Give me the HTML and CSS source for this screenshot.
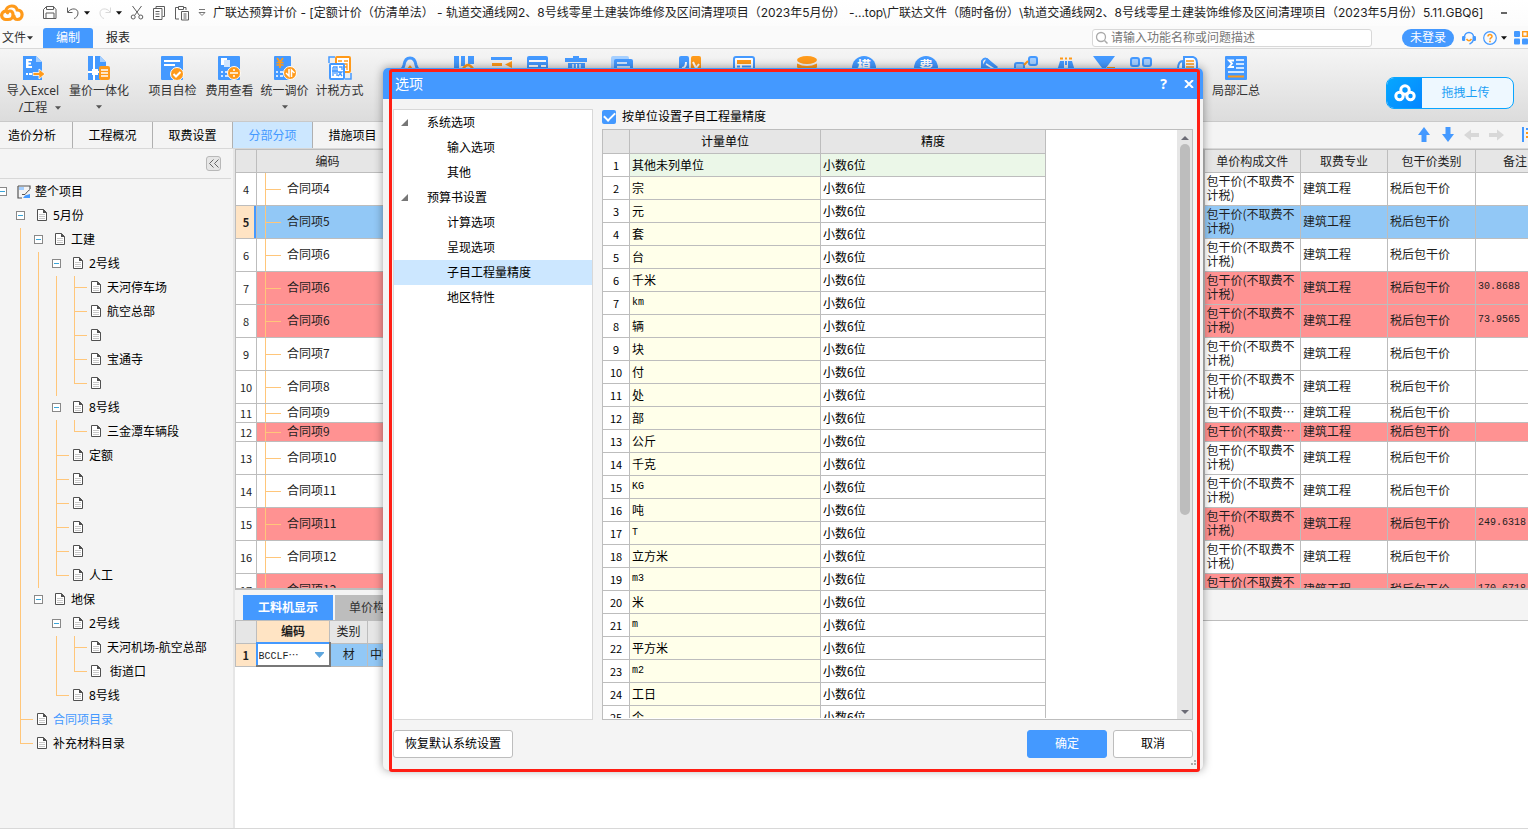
FILE: index.html
```html
<!DOCTYPE html>
<html lang="zh-CN">
<head>
<meta charset="utf-8">
<title>广联达预算计价</title>
<link rel="stylesheet" href="styles.css">
</head>
<body>
<svg class="defs" aria-hidden="true">
  <symbol id="doc" viewBox="0 0 12 14"><path d="M1.5 1.5h6l3 3v8h-9z" fill="#fff" stroke="#505050" stroke-linejoin="round"/><path d="M7 1l4 4H7z" fill="#505050"/><path d="M3 6.5h6M3 8.5h6M3 10.5h6" stroke="#c8c8c8"/></symbol>
  <symbol id="caret" viewBox="0 0 7 4"><path d="M0 0h7L3.5 4z" fill="currentColor"/></symbol>
  <symbol id="cloud" viewBox="0 0 24 18"><path d="M8 15.500H6a4.200 4.200 0 0 1-.4-8.400C6.200 4 8.800 2 11.700 2c3 0 4.900 1.700 5.500 4 3 .2 4.900 2.100 4.900 4.600 0 2.800-2 4.900-4.600 4.900-2.300 0-3.500-1.500-3.500-3.500M8 15.500c4 0 5-1.800 5-5 0-2.600-1.400-3.500-3-3.500-1.200 0-2.200.7-2.500 1.800" fill="none" stroke="#ff9a1a" stroke-width="3.200" stroke-linecap="round"/></symbol>
</svg>
<div class="app">
  <header class="titlebar">
    <svg class="logo" viewBox="0 0 24 18"><use href="#cloud"/></svg>
    <div class="quick">
      <button aria-label="保存"><svg width="16" height="16" viewBox="0 0 16 16"><path d="M1.500 13.500v-9l3-3h7l2.500 3v9zM4.500 1.500v3h7v-3M4 13V8h8v5" fill="none" stroke="#5c5c5c"/></svg></button>
      <button aria-label="撤销"><svg width="14" height="14" viewBox="0 0 14 14"><path d="M1.500 1.500v5h5M2 6c3-4.500 10-4 10 1 0 3-2 5-4 5.500" fill="none" stroke="#5c5c5c"/></svg><svg class="qc" width="6" height="4"><use href="#caret"/></svg></button>
      <button aria-label="恢复"><svg width="14" height="14" viewBox="0 0 14 14"><path d="M12.500 1.500v5h-5M12 6C9 1.500 2 2 2 7c0 3 2 5 4 5.500" fill="none" stroke="#d8d8d8"/></svg><svg class="qc" width="6" height="4"><use href="#caret"/></svg></button>
      <button aria-label="剪切"><svg width="14" height="16" viewBox="0 0 14 16"><path d="M2.500 1l7 9.500M11.500 1l-7 9.500" stroke="#5c5c5c"/><circle cx="3.200" cy="12" r="2" fill="none" stroke="#5c5c5c"/><circle cx="10.800" cy="12" r="2" fill="none" stroke="#5c5c5c"/></svg></button>
      <button aria-label="复制"><svg width="14" height="16" viewBox="0 0 14 16"><path d="M4 3.500V1.500h8.500v10h-2M1.500 3.500h8.500v11h-8.500zM3.500 6.500h4M3.500 9h4M3.500 11.500h4" fill="none" stroke="#5c5c5c"/></svg></button>
      <button aria-label="粘贴"><svg width="16" height="16" viewBox="0 0 16 16"><path d="M5 14H1.500V2.500H4m6 0h2V5M4.500 1.500h5v3h-5zM7.500 6.500h7v8.500h-7zM9.500 9h3M9.500 11h3M9.500 13h3" fill="none" stroke="#5c5c5c"/></svg></button>
      <button aria-label="更多"><svg width="8" height="8" viewBox="0 0 8 8"><path d="M1 .5h6M1 3.500h6L4 6.500z" fill="none" stroke="#777"/></svg></button>
    </div>
    <h1 class="title">广联达预算计价 - [定额计价（仿清单法） - 轨道交通线网2、8号线零星土建装饰维修及区间清理项目（2023年5月份） -...top\广联达文件（随时备份）\轨道交通线网2、8号线零星土建装饰维修及区间清理项目（2023年5月份）5.11.GBQ6]</h1>
    <button class="minimize" aria-label="最小化"></button>
  </header>
  <nav class="menubar">
    <button class="menu file">文件<svg width="6" height="4"><use href="#caret"/></svg></button>
    <button class="menu current">编制</button>
    <button class="menu">报表</button>
    <label class="search"><svg width="14" height="14" viewBox="0 0 14 14"><circle cx="6" cy="6" r="4.500" fill="none" stroke="#aaa" stroke-width="1.300"/><path d="M9.500 9.500l3 3" stroke="#aaa" stroke-width="1.500"/></svg><input type="text" placeholder="请输入功能名称或问题描述" aria-label="搜索"></label>
    <button class="login">未登录</button>
    <button class="tool" aria-label="客服"><svg width="14" height="14" viewBox="0 0 14 14"><path d="M2.500 7V6a4.500 4.500 0 0 1 9 0v1c0 3.500-1.500 5-4 6" fill="none" stroke="#4499ff" stroke-width="1.500"/><rect x="0" y="5" width="3.200" height="5" rx="1.200" fill="#4499ff"/><rect x="10.800" y="5" width="3.200" height="5" rx="1.200" fill="#4499ff"/><path d="M4.500 8q2.500 3.500 5 0" fill="none" stroke="#ff9a1a" stroke-width="1.500"/></svg></button>
    <button class="tool help" aria-label="帮助"><svg width="14" height="14" viewBox="0 0 14 14"><circle cx="7" cy="7" r="6.300" fill="none" stroke="#4499ff" stroke-width="1.200"/><path d="M5 5.500C5 3 9 3 9 5.400 9 7 7 6.800 7 8.500" fill="none" stroke="#ff9a1a" stroke-width="1.500"/><circle cx="7" cy="10.400" r=".9" fill="#ff9a1a"/></svg><svg class="qc" width="6" height="4"><use href="#caret"/></svg></button>
    <button class="tool apps" aria-label="应用"><svg width="14" height="14" viewBox="0 0 14 14"><g fill="#4499ff"><rect width="6" height="6" rx="1"/><rect y="7.500" width="6" height="6" rx="1"/><rect x="8" y="7.500" width="6" height="6" rx="1"/></g><rect x="8.700" y=".7" width="4.600" height="4.600" fill="none" stroke="#ff9a1a" stroke-width="1.400"/></svg></button>
  </nav>
  <div class="ribbon">
    <button class="rb wide"><svg width="24" height="24" viewBox="0 0 24 24"><path d="M2 0h13l6 6v18H2z" fill="#4499ff"/><path d="M15 0v6h6z" fill="#a5cfff"/><path d="M5 3h6v2H7.500v1.500H10v2H7.500V10H11v2H5zM5 17h2v2H5zM8 17h3v2H8z" fill="#fff"/><path d="M12 16.500h6V13l6 5-6 5v-3.500h-6z" fill="#ff9a1a" stroke="#fff" stroke-width=".8"/></svg><span>导入Excel<br>/工程</span><svg class="drop drop-right" width="6" height="4"><use href="#caret"/></svg></button>
    <button class="rb wide"><svg width="24" height="24" viewBox="0 0 24 24"><path d="M1 0h12l6 6v5h-6v13H1z" fill="#4499ff"/><path d="M13 0v6h6z" fill="#a5cfff"/><path d="M7 0v24M1 16h12" stroke="#fff" stroke-width="2"/><rect x="5" y="13" width="6" height="6" fill="#fff"/><rect x="12" y="10" width="11" height="14" rx="2" fill="#ff9a1a"/><path d="M14 14h7M14 17h7M14 20h7" stroke="#fff" stroke-width="1.300"/></svg><span>量价一体化</span><svg class="drop" width="6" height="4"><use href="#caret"/></svg></button>
    <button class="rb check"><svg width="24" height="24" viewBox="0 0 24 24"><rect x="0" width="22" height="24" rx="1" fill="#4499ff"/><path d="M3 5h16M3 9h11" stroke="#fff" stroke-width="2"/><circle cx="16" cy="18" r="6.500" fill="#ff9a1a" stroke="#fff"/><path d="M12.500 18l2.500 2.500 4.500-4.500" fill="none" stroke="#fff" stroke-width="2"/></svg><span>项目自检</span></button>
    <button class="rb"><svg width="24" height="24" viewBox="0 0 24 24"><rect x="0" width="22" height="24" rx="1" fill="#4499ff"/><rect x="3" y="2" width="6" height="7" fill="#fff"/><rect x="6" y="4" width="6" height="7" fill="#cfe5ff"/><path d="M3 16h2M7 16h3M3 20h2M7 20h3" stroke="#fff" stroke-width="1.500"/><circle cx="16" cy="17" r="6.500" fill="#ff9a1a" stroke="#fff"/><path d="M12 17h8" stroke="#fff" stroke-width="1.500"/><circle cx="16" cy="14" r="1" fill="#fff"/><circle cx="16" cy="20" r="1" fill="#fff"/></svg><span>费用查看</span></button>
    <button class="rb narrow"><svg width="24" height="24" viewBox="0 0 24 24"><rect x="1" width="17" height="24" rx="1" fill="#4499ff"/><path d="M4 2l3 4 3-4M7 6v6M3.500 6.500h7M3.500 9h7" fill="none" stroke="#ff9a1a" stroke-width="1.700"/><path d="M3 16h2M7 16h3M3 20h2M7 20h3" stroke="#fff" stroke-width="1.500"/><circle cx="17" cy="17" r="6.500" fill="#ff9a1a" stroke="#fff"/><path d="M16 13v7l-3-3M18.500 21v-7l3 3" fill="none" stroke="#fff" stroke-width="1.500"/></svg><span>统一调价</span><svg class="drop" width="6" height="4"><use href="#caret"/></svg></button>
    <button class="rb"><svg width="24" height="24" viewBox="0 0 24 24"><path d="M1 7V1h6M23 17v6h-6" fill="none" stroke="#4499ff" stroke-width="1.500"/><rect x="8" y="1" width="14" height="15" rx="1" fill="#fff" stroke="#ff9a1a" stroke-width="2"/><path d="M10 5h4M16 5h4M12 8h7v6M15 11h4" stroke="#ff9a1a" stroke-width="1.300" fill="none"/><rect x="2" y="8" width="14" height="15" rx="1" fill="#fff" stroke="#4499ff" stroke-width="2"/><path d="M5 11h4v9M5 11v9M4 15h6M7 12v6M11 11h3v3M10 16h4l-4 4M11 16l3 4" fill="none" stroke="#4499ff" stroke-width="1.300"/></svg><span>计税方式</span></button>
    <span class="ic s30"><svg width="24" height="24" viewBox="0 0 24 24"><path d="M0 15q5-1 6-6 1-7 6-7t6 7q1 5 6 6" fill="none" stroke="#4499ff" stroke-width="3"/><path d="M12 9l3 4H9z" fill="#ff9a1a"/></svg></span>
    <span class="ic s30"><svg width="24" height="24" viewBox="0 0 24 24"><path d="M2 0h5v16H2zM9 0h4v10H9zM16 0h6v8h-6z" fill="#4499ff"/><path d="M11 13q5-8 10 0" fill="none" stroke="#ff9a1a" stroke-width="2.500"/></svg></span>
    <span class="ic s14"><svg width="24" height="24" viewBox="0 0 24 24"><path d="M1 1h21v3H1zM1 12h21v3H1z" fill="#4499ff"/><path d="M2 7h10v3H2zM22 5v7l-7-3.500z" fill="#ff9a1a"/></svg></span>
    <span class="ic s12"><svg width="24" height="24" viewBox="0 0 24 24"><rect x="1" width="21" height="24" rx="2" fill="#4499ff"/><path d="M3 5h17M3 10h9M15 10h5" stroke="#fff" stroke-width="2"/></svg></span>
    <span class="ic s14"><svg width="24" height="24" viewBox="0 0 24 24"><path d="M9 0h6v2h8v4H1V2h8zM4 7h17v17H4z" fill="#4499ff"/><path d="M9 8v12M12.500 8v12M16 8v12" stroke="#fff" stroke-width="1.300"/></svg></span>
    <span class="ic s22"><svg width="24" height="24" viewBox="0 0 24 24"><rect x="1" width="18" height="20" rx="2" fill="#a5cfff"/><rect x="4" y="3" width="19" height="20" rx="2" fill="#4499ff"/><path d="M7 7h10M7 11h13" stroke="#fff" stroke-width="1.500"/></svg></span>
    <span class="ic s44"><svg width="24" height="24" viewBox="0 0 24 24"><rect x="1" width="10" height="24" rx="2" fill="#4499ff"/><rect x="13" width="10" height="24" rx="2" fill="#ff9a1a"/><path d="M4 12q4 0 4-6M15 6l3 6 3-4" fill="none" stroke="#fff" stroke-width="2"/></svg></span>
    <span class="ic s30"><svg width="24" height="24" viewBox="0 0 24 24"><rect x="2" y="1" width="20" height="22" rx="2" fill="#fff" stroke="#4499ff" stroke-width="2"/><path d="M5 6h14" stroke="#ff9a1a" stroke-width="4"/><path d="M5 10.500h3M10 10.500h9" stroke="#4499ff" stroke-width="2"/></svg></span>
    <span class="ic s38"><svg width="24" height="24" viewBox="0 0 24 24"><ellipse cx="13" cy="4" rx="10" ry="4" fill="#ff9a1a"/><path d="M3 7.500q10 5 20 0v4q-10 5-20 0z" fill="#ff9a1a"/></svg></span>
    <span class="ic s34 disc">模</span>
    <span class="ic s38 disc">费</span>
    <span class="ic s38"><svg width="24" height="24" viewBox="0 0 24 24"><path d="M11 2l11 9-8 9-11-5z" fill="#4499ff"/><path d="M6 12V5q3-5 7 0v5" fill="none" stroke="#4499ff" stroke-width="2"/><path d="M10 8l8 5" stroke="#fff" stroke-width="1.500"/></svg></span>
    <span class="ic s14"><svg width="24" height="24" viewBox="0 0 24 24"><rect x="15" y="1" width="8" height="8" rx="2" fill="#a5cfff" stroke="#4499ff" stroke-width="2"/><rect x="1" y="7" width="9" height="8" rx="2" fill="#a5cfff" stroke="#4499ff" stroke-width="2"/><path d="M10 9l4-4" stroke="#ff9a1a" stroke-width="2"/></svg></span>
    <span class="ic s16"><svg width="24" height="24" viewBox="0 0 24 24"><path d="M6 2.500h3M11 2.500h2M15 2.500h3" stroke="#ff9a1a" stroke-width="2"/><path d="M6 5h4v10H3zM11 5h2v4h-2zM14 5h4l3 10h-7z" fill="#4499ff"/></svg></span>
    <span class="ic s14"><svg width="24" height="24" viewBox="0 0 24 24"><path d="M1 0h22l-9 12v8l-4-3v-5z" fill="#4499ff"/><path d="M15 12h8" stroke="#ff9a1a" stroke-width="2"/></svg></span>
    <span class="ic s14"><svg width="24" height="24" viewBox="0 0 24 24"><rect x="1" y="2" width="8" height="8" rx="2" fill="#a5cfff" stroke="#4499ff" stroke-width="2"/><rect x="13" y="2" width="8" height="8" rx="2" fill="#a5cfff" stroke="#4499ff" stroke-width="2"/></svg></span>
    <span class="ic s22"><svg width="24" height="24" viewBox="0 0 24 24"><path d="M8 1h9q4 1 4 6v12H8z" fill="#fff" stroke="#4499ff" stroke-width="2"/><path d="M10 5h8M10 8h8M10 11h8" stroke="#ff9a1a" stroke-width="1.500"/><path d="M2 13q0-8 5-8v8z" fill="#fff" stroke="#4499ff" stroke-width="2"/></svg></span>
    <button class="rb last"><svg width="24" height="24" viewBox="0 0 24 24"><rect x="1" width="22" height="24" rx="1" fill="#4499ff"/><path d="M10 4.500H5l3 3-3 3.500h5" fill="none" stroke="#fff" stroke-width="1.800"/><path d="M12 4h8M12 8h8M12 12h8M4 16h16" stroke="#fff" stroke-width="1.700"/><path d="M4 20.500h16" stroke="#ff9a1a" stroke-width="2"/></svg><span>局部汇总</span></button>
    <button class="upload"><span class="up-icon"><svg width="24" height="20" viewBox="0 0 24 20"><g fill="none" stroke="#fff" stroke-width="3"><circle cx="12" cy="7" r="4.200"/><circle cx="6.500" cy="13" r="3.700"/><circle cx="17.500" cy="13" r="3.700"/></g></svg></span><span class="up-text">拖拽上传</span></button>
  </div>
  <nav class="tabs">
    <button class="tab first">造价分析</button><button class="tab">工程概况</button><button class="tab">取费设置</button><button class="tab active">分部分项</button><button class="tab">措施项目</button>
    <div class="arrows">
      <button aria-label="上移"><svg width="16" height="16" viewBox="0 0 16 16"><path d="M8 0l6 8h-3.500v7h-5V8H2z" fill="#4499ff"/></svg></button>
      <button aria-label="下移"><svg width="16" height="16" viewBox="0 0 16 16"><path d="M8 15L2 7h3.500V0h5v7H14z" fill="#4499ff"/></svg></button>
      <button aria-label="左移"><svg width="16" height="16" viewBox="0 0 16 16"><path d="M0 8l7-5.500V6h8v4H7v3.500z" fill="#d8d8d8"/></svg></button>
      <button aria-label="右移"><svg width="16" height="16" viewBox="0 0 16 16"><path d="M16 8L9 2.500V6H1v4h8v3.500z" fill="#d8d8d8"/></svg></button>
      <button class="edge" aria-label="展开到"><svg width="6" height="16" viewBox="0 0 6 16"><path d="M1 0v15M4 2h2" stroke="#4499ff" stroke-width="2"/><path d="M4 6h2M4 10h2" stroke="#ff9a1a" stroke-width="2"/></svg></button>
    </div>
  </nav>
  <main class="work">
    <aside class="side">
      <div class="side-top"><button class="fold" aria-label="收起"><svg width="10" height="9" viewBox="0 0 10 9"><path d="M4.500.5l-4 4 4 4M9.500.5l-4 4 4 4" fill="none" stroke="#666"/></svg></button></div>
      <ul class="tree">
        <li class="root"><i class="g"><button class="ex" aria-label="折叠"></button></i><svg class="ri" viewBox="0 0 14 14"><path d="M1 1h12v3M1 1v12h4" fill="none" stroke="#555" stroke-width="1.200"/><path d="M2 2h5v3H2z" fill="#a5cfff"/><path d="M5 9.500h3q3-4 5-5" fill="none" stroke="#555"/><path d="M6 13l2-2.500 5-1.500v4z" fill="#4499ff"/></svg>整个项目</li>
        <li><i class="g"></i><i class="g"><button class="ex" aria-label="折叠"></button></i><svg class="di"><use href="#doc"/></svg>5月份</li>
        <li><i class="g"></i><i class="g v"></i><i class="g"><button class="ex" aria-label="折叠"></button></i><svg class="di"><use href="#doc"/></svg>工建</li>
        <li><i class="g"></i><i class="g v"></i><i class="g v"></i><i class="g"><button class="ex" aria-label="折叠"></button></i><svg class="di"><use href="#doc"/></svg>2号线</li>
        <li><i class="g"></i><i class="g v"></i><i class="g v"></i><i class="g v"></i><i class="g v b"></i><svg class="di"><use href="#doc"/></svg>天河停车场</li>
        <li><i class="g"></i><i class="g v"></i><i class="g v"></i><i class="g v"></i><i class="g v b"></i><svg class="di"><use href="#doc"/></svg>航空总部</li>
        <li><i class="g"></i><i class="g v"></i><i class="g v"></i><i class="g v"></i><i class="g v b"></i><svg class="di"><use href="#doc"/></svg></li>
        <li><i class="g"></i><i class="g v"></i><i class="g v"></i><i class="g v"></i><i class="g v b"></i><svg class="di"><use href="#doc"/></svg>宝通寺</li>
        <li><i class="g"></i><i class="g v"></i><i class="g v"></i><i class="g v"></i><i class="g h b"></i><svg class="di"><use href="#doc"/></svg></li>
        <li><i class="g"></i><i class="g v"></i><i class="g v"></i><i class="g"><button class="ex" aria-label="折叠"></button></i><svg class="di"><use href="#doc"/></svg>8号线</li>
        <li><i class="g"></i><i class="g v"></i><i class="g v"></i><i class="g v"></i><i class="g h b"></i><svg class="di"><use href="#doc"/></svg>三金潭车辆段</li>
        <li><i class="g"></i><i class="g v"></i><i class="g v"></i><i class="g v b"></i><svg class="di"><use href="#doc"/></svg>定额</li>
        <li><i class="g"></i><i class="g v"></i><i class="g v"></i><i class="g v b"></i><svg class="di"><use href="#doc"/></svg></li>
        <li><i class="g"></i><i class="g v"></i><i class="g v"></i><i class="g v b"></i><svg class="di"><use href="#doc"/></svg></li>
        <li><i class="g"></i><i class="g v"></i><i class="g v"></i><i class="g v b"></i><svg class="di"><use href="#doc"/></svg></li>
        <li><i class="g"></i><i class="g v"></i><i class="g v"></i><i class="g v b"></i><svg class="di"><use href="#doc"/></svg></li>
        <li><i class="g"></i><i class="g v"></i><i class="g v"></i><i class="g h b"></i><svg class="di"><use href="#doc"/></svg>人工</li>
        <li><i class="g"></i><i class="g v"></i><i class="g"><button class="ex" aria-label="折叠"></button></i><svg class="di"><use href="#doc"/></svg>地保</li>
        <li><i class="g"></i><i class="g v"></i><i class="g"></i><i class="g"><button class="ex" aria-label="折叠"></button></i><svg class="di"><use href="#doc"/></svg>2号线</li>
        <li><i class="g"></i><i class="g v"></i><i class="g"></i><i class="g v"></i><i class="g v b"></i><svg class="di"><use href="#doc"/></svg>天河机场-航空总部</li>
        <li><i class="g"></i><i class="g v"></i><i class="g"></i><i class="g v"></i><i class="g h b"></i><svg class="di"><use href="#doc"/></svg>&nbsp;街道口</li>
        <li><i class="g"></i><i class="g v"></i><i class="g"></i><i class="g h b"></i><svg class="di"><use href="#doc"/></svg>8号线</li>
        <li class="on"><i class="g"></i><i class="g v b"></i><svg class="di"><use href="#doc"/></svg>合同项目录</li>
        <li><i class="g"></i><i class="g h b"></i><svg class="di"><use href="#doc"/></svg>补充材料目录</li>
      </ul>
    </aside>
    <section class="content">
      <div class="grid-pane">
        <table class="grid main-grid">
          <colgroup><col class="c-num"><col class="c-code"><col><col class="c-file"><col class="c-major"><col class="c-kind"><col class="c-note"></colgroup>
          <thead><tr><th></th><th>编码</th><th></th><th>单价构成文件</th><th>取费专业</th><th>包干价类别</th><th>备注</th></tr></thead>
          <tbody>
            <tr><td>4</td><td>合同项4</td><td></td><td>包干价(不取费不<br>计税)</td><td>建筑工程</td><td>税后包干价</td><td></td></tr>
            <tr class="sel"><td>5</td><td>合同项5</td><td></td><td>包干价(不取费不<br>计税)</td><td>建筑工程</td><td>税后包干价</td><td></td></tr>
            <tr><td>6</td><td>合同项6</td><td></td><td>包干价(不取费不<br>计税)</td><td>建筑工程</td><td>税后包干价</td><td></td></tr>
            <tr class="red"><td>7</td><td>合同项6</td><td></td><td>包干价(不取费不<br>计税)</td><td>建筑工程</td><td>税后包干价</td><td>30.8688</td></tr>
            <tr class="red"><td>8</td><td>合同项6</td><td></td><td>包干价(不取费不<br>计税)</td><td>建筑工程</td><td>税后包干价</td><td>73.9565</td></tr>
            <tr><td>9</td><td>合同项7</td><td></td><td>包干价(不取费不<br>计税)</td><td>建筑工程</td><td>税后包干价</td><td></td></tr>
            <tr><td>10</td><td>合同项8</td><td></td><td>包干价(不取费不<br>计税)</td><td>建筑工程</td><td>税后包干价</td><td></td></tr>
            <tr class="low"><td>11</td><td>合同项9</td><td></td><td>包干价(不取费⋯</td><td>建筑工程</td><td>税后包干价</td><td></td></tr>
            <tr class="low red"><td>12</td><td>合同项9</td><td></td><td>包干价(不取费⋯</td><td>建筑工程</td><td>税后包干价</td><td></td></tr>
            <tr><td>13</td><td>合同项10</td><td></td><td>包干价(不取费不<br>计税)</td><td>建筑工程</td><td>税后包干价</td><td></td></tr>
            <tr><td>14</td><td>合同项11</td><td></td><td>包干价(不取费不<br>计税)</td><td>建筑工程</td><td>税后包干价</td><td></td></tr>
            <tr class="red"><td>15</td><td>合同项11</td><td></td><td>包干价(不取费不<br>计税)</td><td>建筑工程</td><td>税后包干价</td><td>249.6318</td></tr>
            <tr><td>16</td><td>合同项12</td><td></td><td>包干价(不取费不<br>计税)</td><td>建筑工程</td><td>税后包干价</td><td></td></tr>
            <tr class="red"><td>17</td><td>合同项12</td><td></td><td>包干价(不取费不<br>计税)</td><td>建筑工程</td><td>税后包干价</td><td>170.6718</td></tr>
          </tbody>
        </table>
      </div>
      <div class="lower">
        <div class="lower-tabs"><button class="lt active">工料机显示</button><button class="lt">单价构成</button></div>
        <table class="grid lower-grid">
          <colgroup><col class="c-num"><col class="l-code"><col class="l-type"><col></colgroup>
          <thead><tr><th></th><th class="cur">编码</th><th>类别</th><th></th></tr></thead>
          <tbody><tr><td>1</td><td class="edit"><div class="combo"><input type="text" value="BCCLF⋯" aria-label="编码"><svg width="9" height="6" viewBox="0 0 9 6"><path d="M0 0h9v1L4.500 6 0 1z" fill="#5ea6de"/></svg></div></td><td>材</td><td>中定额</td></tr></tbody>
        </table>
      </div>
    </section>
  </main>

  <section class="dialog" role="dialog" aria-labelledby="dlg-title">
    <header class="dlg-head"><h2 id="dlg-title">选项</h2><button aria-label="帮助">?</button><button aria-label="关闭"><svg width="10" height="8" viewBox="0 0 10 8"><path d="M1 0l8 8M9 0L1 8" stroke="#fff" stroke-width="2"/></svg></button></header>
    <div class="dlg-body">
      <ul class="opts">
        <li class="grp"><svg width="7" height="7"><path d="M7 0v7H0z" fill="#777"/></svg>系统选项</li>
        <li>输入选项</li>
        <li>其他</li>
        <li class="grp"><svg width="7" height="7"><path d="M7 0v7H0z" fill="#777"/></svg>预算书设置</li>
        <li>计算选项</li>
        <li>呈现选项</li>
        <li class="on">子目工程量精度</li>
        <li>地区特性</li>
      </ul>
      <div class="panel">
        <label class="chk"><input type="checkbox" checked>按单位设置子目工程量精度</label>
        <div class="unit-box">
          <div class="unit-scroll">
            <table class="grid units">
              <colgroup><col class="u-num"><col class="u-unit"><col class="u-prec"></colgroup>
              <thead><tr><th></th><th>计量单位</th><th>精度</th></tr></thead>
              <tbody>
                <tr class="hl"><td>1</td><td>其他未列单位</td><td>小数6位</td></tr>
                <tr><td>2</td><td>宗</td><td>小数6位</td></tr>
                <tr><td>3</td><td>元</td><td>小数6位</td></tr>
                <tr><td>4</td><td>套</td><td>小数6位</td></tr>
                <tr><td>5</td><td>台</td><td>小数6位</td></tr>
                <tr><td>6</td><td>千米</td><td>小数6位</td></tr>
                <tr><td>7</td><td class="lat">km</td><td>小数6位</td></tr>
                <tr><td>8</td><td>辆</td><td>小数6位</td></tr>
                <tr><td>9</td><td>块</td><td>小数6位</td></tr>
                <tr><td>10</td><td>付</td><td>小数6位</td></tr>
                <tr><td>11</td><td>处</td><td>小数6位</td></tr>
                <tr><td>12</td><td>部</td><td>小数6位</td></tr>
                <tr><td>13</td><td>公斤</td><td>小数6位</td></tr>
                <tr><td>14</td><td>千克</td><td>小数6位</td></tr>
                <tr><td>15</td><td class="lat">KG</td><td>小数6位</td></tr>
                <tr><td>16</td><td>吨</td><td>小数6位</td></tr>
                <tr><td>17</td><td class="lat">T</td><td>小数6位</td></tr>
                <tr><td>18</td><td>立方米</td><td>小数6位</td></tr>
                <tr><td>19</td><td class="lat">m3</td><td>小数6位</td></tr>
                <tr><td>20</td><td>米</td><td>小数6位</td></tr>
                <tr><td>21</td><td class="lat">m</td><td>小数6位</td></tr>
                <tr><td>22</td><td>平方米</td><td>小数6位</td></tr>
                <tr><td>23</td><td class="lat">m2</td><td>小数6位</td></tr>
                <tr><td>24</td><td>工日</td><td>小数6位</td></tr>
                <tr><td>25</td><td>个</td><td>小数6位</td></tr>
              </tbody>
            </table>
          </div>
          <div class="bar"><svg width="8" height="4"><path d="M4 0l4 4H0z" fill="#6b6b75"/></svg><div class="track"><div class="thumb"></div></div><svg width="8" height="4"><path d="M0 0h8L4 4z" fill="#6b6b75"/></svg></div>
        </div>
      </div>
    </div>
    <footer class="dlg-foot"><button class="btn reset">恢复默认系统设置</button><button class="btn ok">确定</button><button class="btn">取消</button></footer>
    <svg class="grip" width="6" height="6"><path d="M3 0h2v2H3zM0 3h2v2H0zM3 3h2v2H3z" fill="#aaa"/></svg>
    <div class="mark"></div>
  </section>
</div>
</body>
</html>
```
FILE: styles.css
```css
* { box-sizing: border-box; }
html, body { margin: 0; height: 100%; }
body { font: 12px/16px "Noto Sans", "Noto Sans CJK SC", sans-serif; color: #1e1e1e; overflow: hidden; }
button { font: inherit; color: inherit; background: none; border: 0; padding: 0; margin: 0; }
input { font: inherit; color: inherit; margin: 0; }
h1, h2 { font-size: 12px; font-weight: 400; margin: 0; }
ul { list-style: none; margin: 0; padding: 0; }
svg { display: block; flex: none; }
.defs { position: absolute; width: 0; height: 0; }
.app { position: relative; display: flex; flex-direction: column; height: 100vh; overflow: hidden; background: #f4f4f4; border-bottom: 1px solid #d8d8d8; }

.titlebar { display: flex; align-items: center; height: 26px; background: linear-gradient(#fff, #fcfcfc); }
.logo { width: 24px; height: 18px; }
.quick { display: flex; align-items: center; width: 189px; padding-left: 18px; gap: 8px; color: #222; }
.quick button { display: flex; align-items: center; gap: 4px; }
.qc { color: #111; }
.title { flex: 1; min-width: 0; white-space: nowrap; line-height: 28px; font-family: Inter, "Noto Sans CJK SC", sans-serif; }
.minimize { width: 6px; height: 2px; background: #666; margin-right: 21px; }

.menubar { display: flex; align-items: center; height: 23px; padding-top: 2px; background: #fafafa; border-bottom: 1px solid #d8d8d8; }
.menu { height: 20px; padding: 0 13px; }
.menu.file { display: flex; align-items: center; gap: 1px; padding: 0; width: 43px; padding-left: 2px; color: #333; }
.menu.current { background: #4499ff; color: #fff; border-radius: 3px 3px 0 0; }
.search { display: flex; align-items: center; gap: 2px; width: 280px; height: 18px; margin-left: auto; margin-right: 30px; padding-left: 2px; border: 1px solid #d8d8d8; border-radius: 3px; background: #fff; }
.search input { flex: 1; min-width: 0; border: 0; padding: 0; outline: 0; background: none; height: 16px; }
.search input::placeholder { color: #777; }
.login { width: 52px; height: 18px; border-radius: 9px; background: #4499ff; color: #fff; margin-right: 8px; }
.tool { display: flex; align-items: center; gap: 4px; margin-right: 7px; }
.tool.apps { margin-right: 0; width: 14px; overflow: hidden; }

.ribbon { display: flex; align-items: flex-start; height: 73px; background: linear-gradient(#f5f5f5, #dcdcdc); border-bottom: 1px solid #c9c9c9; padding: 7px 14px 0 0; }
.rb { display: flex; flex-direction: column; align-items: center; width: 57px; white-space: nowrap; line-height: 17px; color: #333; }
.rb > span { margin-top: 2px; }
.rb.wide { width: 66px; }
.rb.narrow { width: 53px; }
.rb.check { margin-left: 12px; }
.rb.last { width: 56px; margin-left: 8px; }
.drop { margin-top: 6px; color: #555; }
.drop-right { align-self: flex-end; margin-top: -10px; margin-right: 5px; }
.ic { width: 24px; height: 24px; flex: none; }
.s12 { margin-left: 12px; } .s14 { margin-left: 14px; } .s16 { margin-left: 16px; } .s22 { margin-left: 22px; }
.s30 { margin-left: 30px; } .s34 { margin-left: 34px; } .s38 { margin-left: 38px; } .s44 { margin-left: 44px; }
.disc { border-radius: 50%; background: #4499ff; color: #fff; font-weight: 700; font-size: 14px; line-height: 20px; text-align: center; }
.upload { display: flex; width: 128px; height: 32px; margin: 21px 0 0 auto; border: 1px solid #09a5ff; border-radius: 8px; overflow: hidden; background: #eef8ff; color: #1b9ff5; }
.up-icon { width: 35px; height: 100%; display: grid; place-items: center; background: linear-gradient(135deg, #06a7ff, #0686ff); }
.up-text { flex: 1; line-height: 30px; padding-right: 4px; }

.tabs { display: flex; height: 27px; border-bottom: 1px solid #d8d8d8; background: #f4f4f4; }
.tab { width: 80px; border-right: 1px solid #b0b0b0; color: #000; padding-top: 2px; }
.tab.first { width: 73px; padding-right: 8px; }
.tab.active { background: #cce7ff; color: #4499ff; }
.arrows { display: flex; align-items: center; gap: 8px; margin-left: auto; }
.arrows .edge { margin-left: 10px; }

.work { display: flex; flex: 1; min-height: 0; }
.side { flex: none; width: 235px; border-right: 2px solid #e6e6e6; }
.side-top { display: flex; justify-content: flex-end; align-items: center; height: 30px; margin-right: 2px; padding-right: 10px; border-bottom: 1px solid #d8d8d8; }
.fold { display: grid; place-items: center; width: 15px; height: 15px; border: 1px solid #b8b8b8; border-radius: 3px; background: #e6e6e6; }
.tree { margin: 1px 0 0 -6px; color: #000; }
.tree li { display: flex; align-items: center; height: 24px; line-height: 18px; white-space: nowrap; }
.g { position: relative; flex: none; width: 18px; height: 24px; }
.g.v::before, .g.h::before { content: ""; position: absolute; left: 8px; top: 0; width: 1px; height: 24px; background: #ffc67a; }
.g.h::before { height: 12px; }
.g.b::after { content: ""; position: absolute; left: 8px; top: 11px; width: 13px; height: 1px; background: #ffc67a; }
.ex { display: block; width: 9px; height: 9px; margin: 7px 0 0 4px; border: 1px solid #888; background: linear-gradient(#3aa5d8, #3aa5d8) center / 5px 1px no-repeat #fff; }
.di { width: 12px; height: 14px; margin: 0 5px 2px 6px; }
.ri { width: 14px; height: 14px; margin: 0 4px 0 5px; }
.tree .on { color: #4499ff; }

.content { flex: 1; min-width: 0; display: grid; grid-template-rows: 441px 1fr; background: #fff; }
.grid-pane { overflow: hidden; border-bottom: 2px solid #bdbdbd; }
.grid { border-collapse: collapse; table-layout: fixed; font-family: "Noto Sans CJK SC", sans-serif; line-height: 14px; }
.grid th, .grid td { border: 1px solid #bdbdbd; padding: 0 2px 1px; font-weight: 400; text-align: left; white-space: nowrap; overflow: hidden; }
.grid th { background: #e6e6e6; text-align: center; height: 23px; }
.grid td:first-child { text-align: center; font-size: 11px; padding: 0; background: #fff; }
.main-grid { width: calc(100% + 27px); }
.main-grid td { height: 33px; padding-bottom: 3px; }
.main-grid .low td { height: 19px; }
.c-num { width: 21px; } .c-code { width: 144px; } .c-file { width: 97px; } .c-major { width: 87px; } .c-kind { width: 88px; } .c-note { width: 79px; }
.main-grid td:nth-child(2) { padding-left: 30px; background-image: linear-gradient(#ffc67a, #ffc67a), linear-gradient(#ffc67a, #ffc67a); background-size: 1px 100%, 16px 1px; background-position: 8px 0, 8px 50%; background-repeat: no-repeat; }
.main-grid th:nth-child(2) { padding-right: 4px; }
.main-grid th:nth-child(4), .main-grid td:nth-child(4) { border-left-width: 2px; }
.main-grid td:last-child { font: 10px/14px "Liberation Mono", monospace; }
.sel td { background-color: #92c8f6; }
.grid .sel td:first-child { background: #ffe4c4; font-weight: 700; box-shadow: inset -2px 0 #4499ff; }
.red td { background-color: #ff9292; }

.lower-tabs { display: flex; gap: 2px; height: 31px; padding: 5px 0 0 8px; background: #f4f4f4; border-bottom: 1px solid #bdbdbd; }
.lt { width: 90px; height: 25px; background: #bdbdbd; color: #333; padding-left: 14px; text-align: left; white-space: nowrap; }
.lt.active { background: #4499ff; color: #fff; font-weight: 700; padding: 0; text-align: center; }
.lower-grid { width: calc(100% - 325px); }
.lower-grid thead th { border-top: 0; height: 22px; }
.lower-grid td { height: 23px; background: #92c8f6; }
.grid.lower-grid td:first-child { background: #ffe4c4; font-weight: 700; }
.l-code { width: 73px; } .l-type { width: 38px; }
.lower-grid .cur { background: #ffe4c4; font-weight: 700; }
.lower-grid td:nth-child(3) { text-align: center; }
.grid .edit { padding: 0; background: #fff; border: 2px solid #4499ff; border-right-color: #777; border-bottom-color: #777; }
.combo { display: flex; align-items: center; padding-right: 5px; }
.combo input { flex: 1; min-width: 0; height: 18px; border: 0; padding: 0 0 0 1px; background: none; outline: 0; font: 10px/14px "Liberation Mono", "Noto Sans CJK SC", monospace; }

.dialog { position: absolute; left: 383px; top: 68px; width: 820px; display: flex; flex-direction: column; background: #f4f4f4; border-radius: 5px; box-shadow: 0 0 10px rgba(0, 0, 0, .4); color: #000; }
.dlg-head { display: flex; align-items: center; gap: 17px; height: 31px; padding: 0 9px 0 12px; background: #4499ff; color: #fff; border-radius: 5px 5px 0 0; }
.dlg-head h2 { flex: 1; font-size: 14px; }
.dlg-head button { font-weight: 700; font-size: 14px; }
.dlg-body { display: flex; gap: 9px; padding: 10px 10px 0; height: 621px; }
.opts { width: 200px; border: 1px solid #d8d8d8; background: #fff; }
.opts li { display: flex; align-items: center; height: 25px; padding-left: 53px; }
.opts .grp { padding-left: 7px; gap: 19px; }
.opts .on { background: #cce7ff; }
.panel { flex: 1; display: flex; flex-direction: column; min-width: 0; gap: 5px; }
.chk { display: flex; align-items: center; gap: 6px; height: 15px; }
.chk input { appearance: none; display: grid; place-items: center; width: 14px; height: 14px; border-radius: 2px; background: #4499ff; }
.chk input:checked::before { content: ""; width: 9px; height: 5px; margin-bottom: 3px; border: solid #fff; border-width: 0 0 2px 2px; rotate: -45deg; }
.unit-box { flex: 1; min-height: 0; display: flex; background: #fff; border: 1px solid #bdbdbd; }
.unit-scroll { flex: 1; overflow: hidden; margin: -1px 0 1px -1px; }
.units { width: 444px; }
.grid.units th { height: 24px; }
.units td { height: 23px; }
.u-num { width: 27px; } .u-unit { width: 191px; } .u-prec { width: 225px; }
.units td:nth-child(2) { background: #ffffea; }
.units .hl td:nth-child(n+2) { background: #ebf7e8; }
.units .lat { font: 10px/14px "Liberation Mono", monospace; }
.bar { display: flex; flex-direction: column; align-items: center; width: 15px; padding: 6px 0 5px; background: #e6e6e6; gap: 4px; }
.track { flex: 1; width: 10px; }
.thumb { height: 66%; border-radius: 5px; background: #bdbdbd; }
.dlg-foot { display: flex; gap: 6px; padding: 10px 10px 12px; }
.btn { width: 80px; height: 28px; border: 1px solid #bdbdbd; border-radius: 3px; background: #fff; }
.btn.reset { width: 120px; margin-right: auto; }
.btn.ok { background: #4499ff; border-color: #4499ff; color: #fff; }
.grip { position: absolute; right: 6px; bottom: 4px; }
.mark { position: absolute; inset: 1px 3px -2px 6px; border: 3px solid #ff1e14; border-radius: 3px; pointer-events: none; }
```
